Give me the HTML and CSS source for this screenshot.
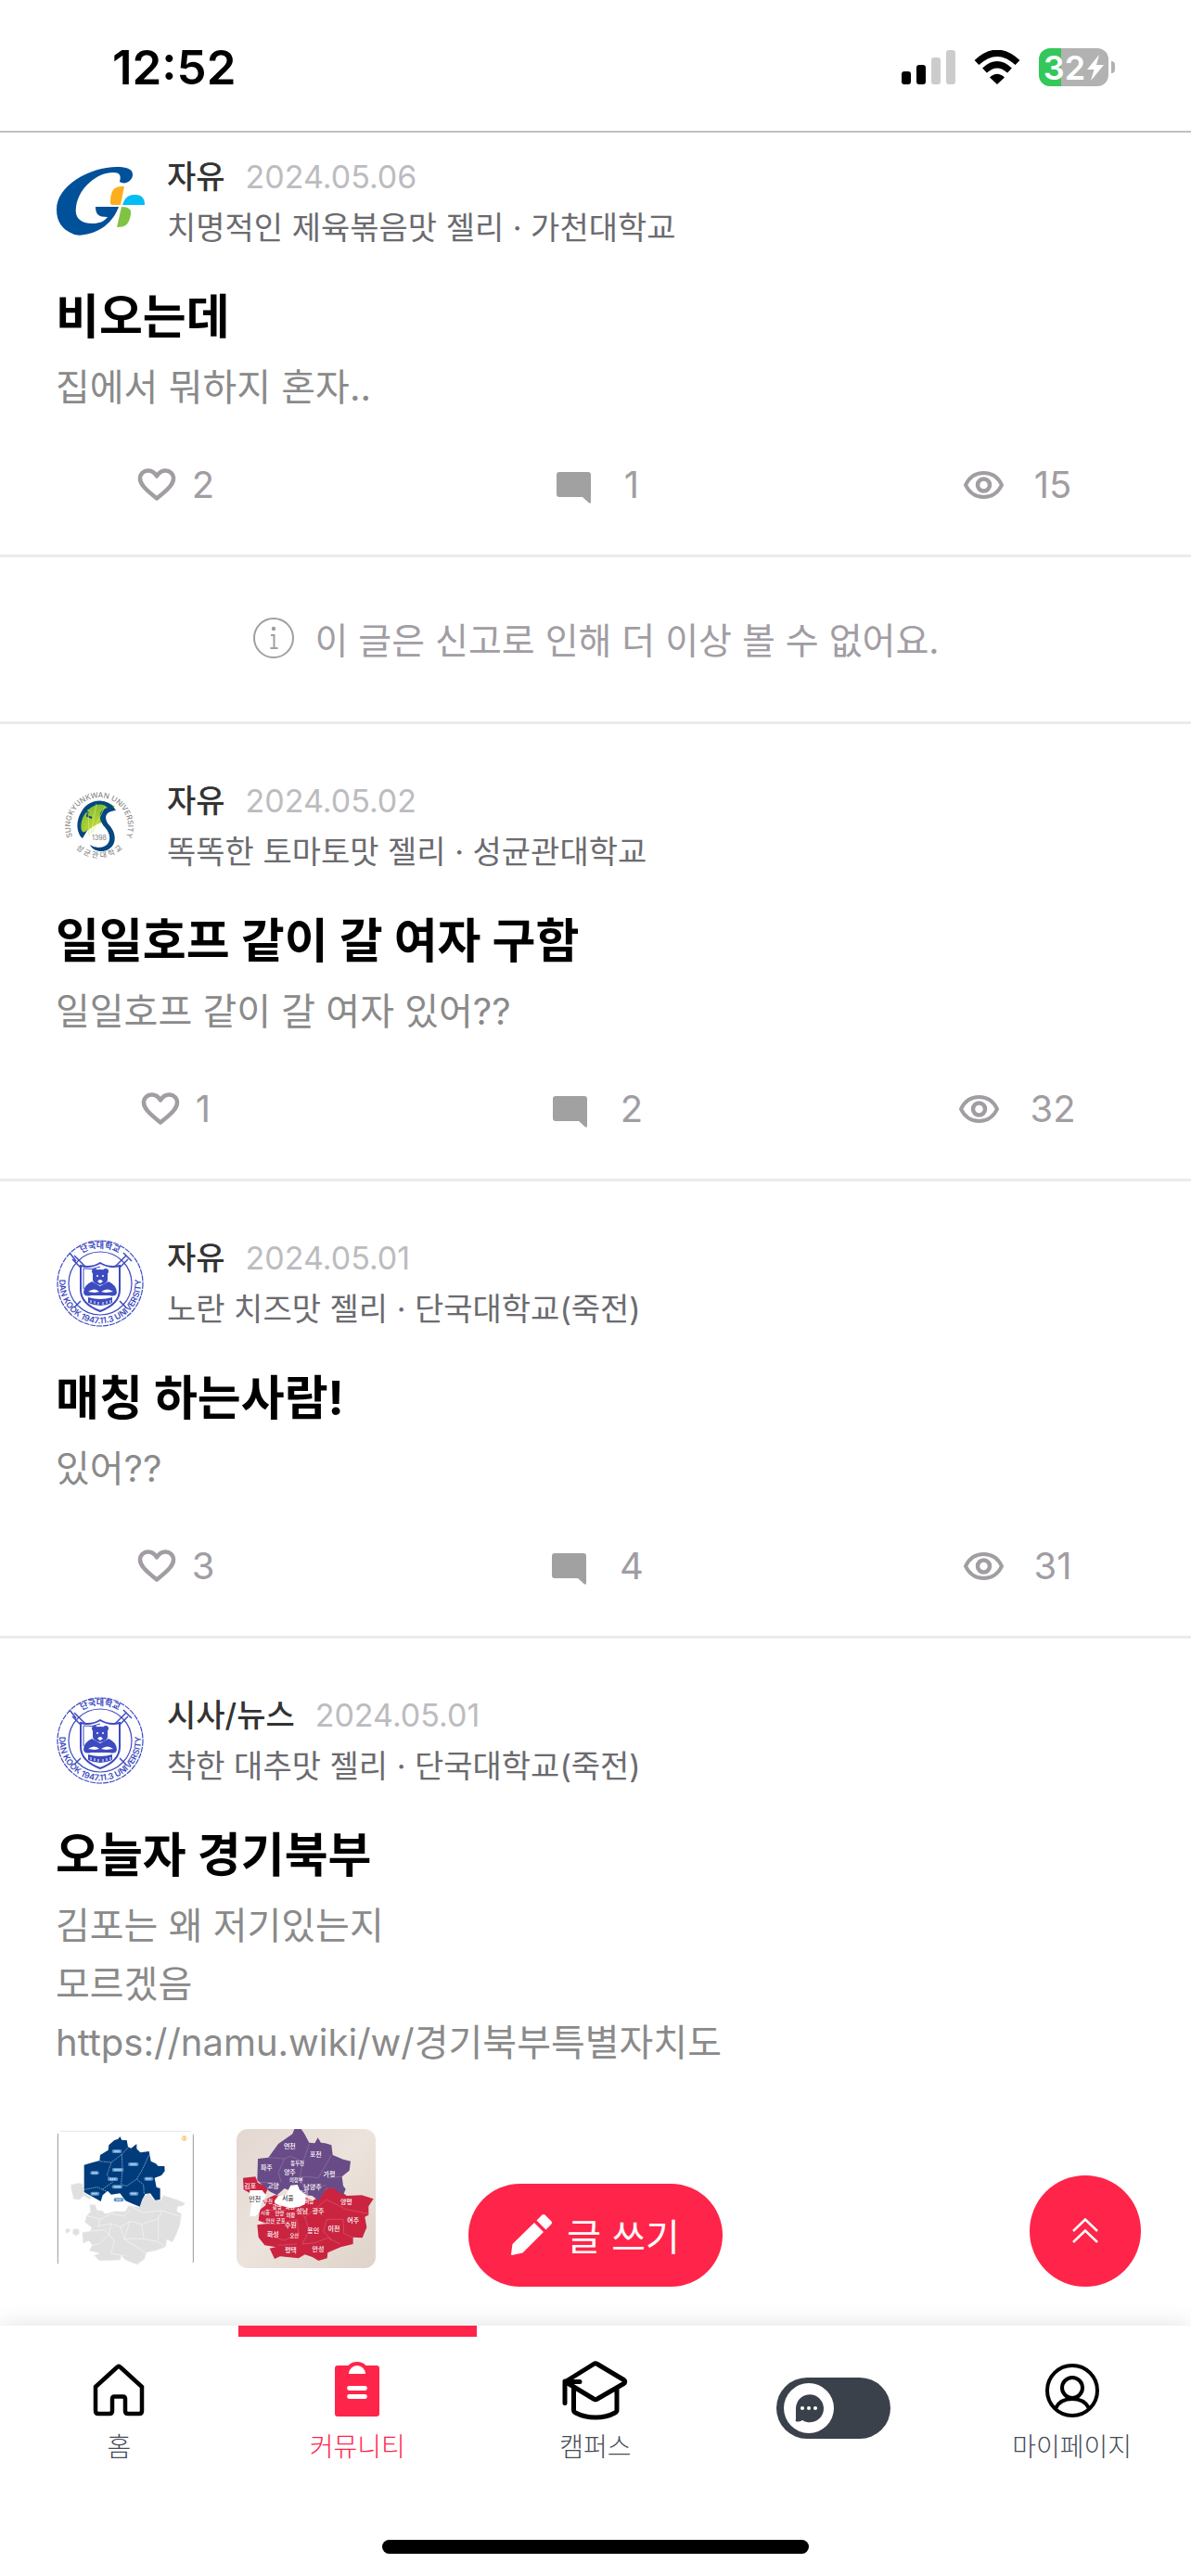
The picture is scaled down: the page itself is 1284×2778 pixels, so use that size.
FILE: index.html
```html
<!DOCTYPE html>
<html lang="ko">
<head>
    <meta charset="UTF-8">
    <meta name="viewport" content="width=device-width, initial-scale=1.0">
    <title>커뮤니티</title>
    <link rel="stylesheet" href="styles.css">
</head>
<body>
    <!-- shared icons and school logos -->
    <svg class="sprite" aria-hidden="true">
        <defs>
            <path id="dk-top" d="M10 48A38 38 0 0 1 86 48"/>
            <path id="dk-bottom" d="M10 25A44 44 0 1 0 86 25"/>
        </defs>
        <symbol id="icon-heart" viewBox="0 0 48 48">
            <path d="M24 38.500C10 27.500 6 22.500 6 17C6 12 10 8.500 14.500 8.500C18.500 8.500 22 11 24 14.500C26 11 29.500 8.500 33.500 8.500C38 8.500 42 12 42 17C42 22.500 38 27.500 24 38.500Z" fill="none" stroke="currentColor" stroke-width="4.500" stroke-linejoin="round"/>
        </symbol>
        <symbol id="icon-comment" viewBox="0 0 48 48">
            <path d="M8 10H39Q42 10 42 13V42Q42 45 39.500 43L33 37H8Q5 37 5 34V13Q5 10 8 10Z" fill="#a1a1a1"/>
        </symbol>
        <symbol id="icon-eye" viewBox="0 0 48 48">
            <path d="M4 24C8 15.500 15 11 23.500 11S39 15.500 43 24C39 32.500 32 37 23.500 37S8 32.500 4 24Z" fill="none" stroke="currentColor" stroke-width="4"/>
            <circle cx="23.500" cy="24" r="6.500" fill="none" stroke="currentColor" stroke-width="4.500"/>
        </symbol>
        <symbol id="logo-dankook" viewBox="0 0 96 96">
            <g fill="none" stroke="#3d4bc0">
                <circle cx="48" cy="48" r="46" stroke-width="1.200" stroke-dasharray="6 1"/>
                <circle cx="48" cy="48" r="34" stroke-width="1.200"/>
                <path d="M20 18L32 30M18 22L28 32M15 15L22 24M76 18L64 30M78 22L68 32M73 15L82 24M27 67L20 74M69 67L76 74" stroke-width="1.500"/>
                <path d="M48 26Q38 32 27 29V55Q27 70 48 78Q69 70 69 55V29Q58 32 48 26Z" fill="#fff" stroke-width="2"/>
                <path d="M48 30Q39 34 30 32V54" stroke-width="1"/>
            </g>
            <g fill="#3d4bc0">
                <circle cx="42" cy="35" r="3"/>
                <circle cx="54" cy="35" r="3"/>
                <path d="M40 38Q40 33 48 33T56 38V44Q56 48 48 50Q40 48 40 44Z"/>
                <path d="M39 46Q30 50 30 58Q31 63 38 61H58Q65 63 66 58Q66 50 57 46L48 51Z"/>
                <path d="M35 63Q48 67 61 63V69Q48 75 35 69Z"/>
            </g>
            <g fill="#fff">
                <circle cx="45" cy="40" r="1"/>
                <circle cx="51" cy="40" r="1"/>
                <path d="M45 46Q48 42 51 46L48 48ZM35 57Q42 52 47 57L42 58ZM49 57Q56 52 62 57L54 58Z"/>
                <path d="M38 66V69M42 67V70M46 68V71M51 68V71M55 67V70M59 66V69" stroke="#fff"/>
            </g>
        </symbol>
    </svg>

    <div class="app">
        <header class="status-bar">
            <time class="clock">12:52</time>
            <div class="status-icons">
                <svg class="signal" viewBox="0 0 58 37">
                    <rect x="0" y="23" width="10" height="14" rx="3"/>
                    <rect x="16" y="16" width="10" height="21" rx="3"/>
                    <rect x="32" y="8" width="10" height="29" rx="3" fill="#ccc"/>
                    <rect x="48" y="0" width="10" height="37" rx="3" fill="#ccc"/>
                </svg>
                <svg class="wifi" viewBox="0 0 50 37">
                    <path d="M3 13.500Q25 -7 47 13.500M11.500 22Q25 9.500 38.500 22" fill="none" stroke="#000" stroke-width="7"/>
                    <path d="M17 29.500Q25 22 33 29.500L25 37Z"/>
                </svg>
                <div class="battery">
                    <span class="battery-level">32<svg class="bolt" viewBox="0 0 18 28"><path d="M13 0L0 16H7.500L4 28L18 11H10Z" fill="#fff"/></svg></span>
                    <span class="battery-tip"></span>
                </div>
            </div>
        </header>

        <main class="feed">
            <article class="post">
                <div class="post-header">
                    <svg class="logo" viewBox="0 -5 96 96">
                        <path d="M83 14.500C84 7 76 5 66 5C37 5 1 25 1 51C1 65 8 72 16 76Q22 80 31 78C47 76 62 65 68 48H43C43 56 46 59 56 59C52 64 47 66 40 66C27 66 20 60 22 48C25 27 45 11 62 11C69 11 71 14 69 21C75 25 82 20 83 14.500Z" fill="#00509a"/>
                        <path d="M59 44C59 31 62 25 74 26L70 46H62Q59 46 59 44Z" fill="#fbaf1c"/>
                        <path d="M72 46C75 37 79 35 86 35C93 35 96 39 96 46Z" fill="#00bdf2"/>
                        <path d="M71 48C79 48 82 51 81 56C79 66 77 70 66 70Z" fill="#80c342"/>
                    </svg>
                    <div class="post-info">
                        <div class="post-meta"><b class="category">자유</b><time class="date">2024.05.06</time></div>
                        <div class="author">치명적인 제육볶음맛 젤리 · 가천대학교</div>
                    </div>
                </div>
                <h2 class="post-title">비오는데</h2>
                <p class="post-body">집에서 뭐하지 혼자..</p>
                <div class="stats">
                    <button class="stat like"><svg class="icon"><use href="#icon-heart"/></svg>2</button>
                    <button class="stat"><svg class="icon"><use href="#icon-comment"/></svg>1</button>
                    <span class="stat"><svg class="icon"><use href="#icon-eye"/></svg>15</span>
                </div>
            </article>

            <div class="notice">
                <svg class="icon" viewBox="0 0 48 48">
                    <g fill="none" stroke="currentColor" stroke-width="2">
                        <circle cx="24" cy="24" r="21"/>
                        <path d="M21 21H24.500V34M20.500 35H28.500"/>
                    </g>
                    <circle cx="24" cy="14" r="2.200" fill="currentColor"/>
                </svg>
                이 글은 신고로 인해 더 이상 볼 수 없어요.
            </div>

            <article class="post">
                <div class="post-header">
                    <svg class="logo" viewBox="0 0 96 96">
                        <defs>
                            <radialGradient id="leaf" cx="0.5" cy="0.8" r="0.9">
                                <stop offset="0" stop-color="#c8dc3c"/>
                                <stop offset="1" stop-color="#6cb52d"/>
                            </radialGradient>
                            <path id="skku-top" d="M24 69A31 31 0 1 1 70 69"/>
                            <path id="skku-bottom" d="M13 58A36 36 0 0 0 81 58"/>
                        </defs>
                        <path d="M64 27Q50 17 37 24Q22 34 26 59Q40 47 52 43Q48 31 64 27Z" fill="url(#leaf)"/>
                        <path d="M65 31C56 16 36 18 28 32C20 45 24 57 29 61L35 51C26 62 25 43 32 34C38 25 50 21 56 28C45 31 46 41 53 49C62 59 59 71 46 71Q41 71 37 68C40 75 50 77 57 73C67 67 65 54 57 46C52 39 53 32 65 31Z" fill="#07477f"/>
                        <path d="M31 30L35 33L34 37L39 39" fill="none" stroke="#07477f" stroke-width="2"/>
                        <path d="M36 58L35 30M38 56L44 24M40 54L53 27" stroke="#d7e870" stroke-width=".7"/>
                        <text x="47" y="63" text-anchor="middle" class="year-text">1398</text>
                        <text class="ring-text"><textPath href="#skku-top" startOffset="50%" text-anchor="middle">SUNGKYUNKWAN UNIVERSITY</textPath></text>
                        <text class="ring-text"><textPath href="#skku-bottom" startOffset="50%" text-anchor="middle">성 균 관 대 학 교</textPath></text>
                    </svg>
                    <div class="post-info">
                        <div class="post-meta"><b class="category">자유</b><time class="date">2024.05.02</time></div>
                        <div class="author">똑똑한 토마토맛 젤리 · 성균관대학교</div>
                    </div>
                </div>
                <h2 class="post-title">일일호프 같이 갈 여자 구함</h2>
                <p class="post-body">일일호프 같이 갈 여자 있어??</p>
                <div class="stats">
                    <button class="stat like"><svg class="icon"><use href="#icon-heart"/></svg>1</button>
                    <button class="stat"><svg class="icon"><use href="#icon-comment"/></svg>2</button>
                    <span class="stat"><svg class="icon"><use href="#icon-eye"/></svg>32</span>
                </div>
            </article>

            <article class="post">
                <div class="post-header">
                    <svg class="logo" viewBox="0 0 96 96">
                        <use href="#logo-dankook"/>
                        <text class="seal-text"><textPath href="#dk-top" startOffset="50%" text-anchor="middle">단국대학교</textPath></text>
                        <text class="seal-text"><textPath href="#dk-bottom" startOffset="50%" text-anchor="middle">DAN KOOK 1947.11.3 UNIVERSITY</textPath></text>
                    </svg>
                    <div class="post-info">
                        <div class="post-meta"><b class="category">자유</b><time class="date">2024.05.01</time></div>
                        <div class="author">노란 치즈맛 젤리 · 단국대학교(죽전)</div>
                    </div>
                </div>
                <h2 class="post-title">매칭 하는사람!</h2>
                <p class="post-body">있어??</p>
                <div class="stats">
                    <button class="stat like"><svg class="icon"><use href="#icon-heart"/></svg>3</button>
                    <button class="stat"><svg class="icon"><use href="#icon-comment"/></svg>4</button>
                    <span class="stat"><svg class="icon"><use href="#icon-eye"/></svg>31</span>
                </div>
            </article>

            <article class="post">
                <div class="post-header">
                    <svg class="logo" viewBox="0 0 96 96">
                        <use href="#logo-dankook"/>
                        <text class="seal-text"><textPath href="#dk-top" startOffset="50%" text-anchor="middle">단국대학교</textPath></text>
                        <text class="seal-text"><textPath href="#dk-bottom" startOffset="50%" text-anchor="middle">DAN KOOK 1947.11.3 UNIVERSITY</textPath></text>
                    </svg>
                    <div class="post-info">
                        <div class="post-meta"><b class="category">시사/뉴스</b><time class="date">2024.05.01</time></div>
                        <div class="author">착한 대추맛 젤리 · 단국대학교(죽전)</div>
                    </div>
                </div>
                <h2 class="post-title">오늘자 경기북부</h2>
                <p class="post-body">김포는 왜 저기있는지<br>모르겠음<br>https://namu.wiki/w/경기북부특별자치도</p>
                <div class="photos">
                    <svg class="photo" viewBox="60 48 450 450">
                        <rect x="60" y="48" width="450" height="450" fill="#fff"/>
                        <path d="M68 55H505" stroke="#e6e6e6" stroke-width="3"/>
                        <path d="M67 62V486M505 62V486" stroke="#999" stroke-width="3"/>
                        <g fill="#e0e0e0" stroke="#f7f7f7" stroke-width="2">
                            <path d="M108 228L134 222L148 226L152 255L178 270L170 276L150 264L138 277L118 275L112 250Z"/>
                            <path d="M170 292L188 292L194 310L212 312L220 322L250 314L285 314L296 294L330 300L345 264L362 256L374 274L400 278L408 262L452 276L480 288L470 298L456 298L452 314L467 322L462 360L452 386L438 414L420 406L416 430L388 440L354 448L348 468L324 487L300 478L284 470L272 458L270 472L230 474L200 474L184 456L202 450L168 442L178 424L168 410L148 418L146 382L172 378L176 366L154 350L160 328L172 316Z"/>
                            <path d="M90 376L98 369L108 372L106 380L94 386ZM116 372L134 370L138 386L126 394L114 386Z"/>
                            <path d="M160 328L204 340L240 322L282 330L300 310M204 340L196 362L240 354L270 366L300 346L338 356L392 338L404 312L340 318L296 294M338 356L346 404L390 412L416 430M240 354L232 388L250 412L238 450L284 458M176 378L220 374L232 388L200 420L178 424M270 366L282 404L318 402L346 404M300 346L282 404L324 430L350 448M392 338L392 404M404 312L462 330" fill="none"/>
                        </g>
                        <path d="M230 116L232 100L250 84L262 80L268 72L274 84L290 84L294 106L304 110L322 96L322 112L334 124L362 120L368 152L384 160L392 168L412 168L413 184L402 198L380 206L386 236L398 240V276L382 278L366 256L350 258L340 276L332 299L310 290L286 280L268 256L240 260L228 248L212 262L206 282L152 252V164L180 156L202 150L204 132Z" fill="#003c7b"/>
                        <path d="M202 152L240 156L274 130L294 108M240 156L226 196L244 220L210 244M362 132L340 180L322 210L344 228L346 258M274 130L276 180L272 228L290 232L322 210M152 244L194 236L226 250" fill="none" stroke="#a9c3dc" stroke-width="2" stroke-dasharray="5 2"/>
                        <g fill="#5c93cb">
                            <rect x="242" y="114" width="32" height="12" rx="6"/>
                            <rect x="294" y="156" width="34" height="12" rx="6"/>
                            <rect x="242" y="174" width="38" height="12" rx="6"/>
                            <rect x="172" y="184" width="28" height="12" rx="6"/>
                            <rect x="228" y="204" width="34" height="12" rx="6"/>
                            <rect x="346" y="203" width="30" height="12" rx="6"/>
                            <rect x="242" y="229" width="34" height="12" rx="6"/>
                            <rect x="172" y="251" width="30" height="12" rx="6"/>
                            <rect x="298" y="251" width="30" height="12" rx="6"/>
                            <rect x="248" y="271" width="32" height="12" rx="6"/>
                        </g>
                        <path d="M250 120H268M302 162H322M250 180H272M178 190H194M236 210H256M352 209H370M250 235H270M178 257H196M304 257H322M256 277H272" stroke="#d7e8f8" stroke-width="5" stroke-dasharray="4 2"/>
                        <circle cx="476" cy="78" r="7" fill="none" stroke="#efa524" stroke-width="2"/>
                        <path d="M476 73V83" stroke="#efa524" stroke-width="3"/>
                    </svg>
                    <svg class="photo" viewBox="645 48 450 450">
                        <defs>
                            <linearGradient id="paper" x1="0" y1="0" x2="1" y2="1">
                                <stop offset="0" stop-color="#e2d8d1"/>
                                <stop offset="0.5" stop-color="#ece3dc"/>
                                <stop offset="1" stop-color="#dfd3c8"/>
                            </linearGradient>
                        </defs>
                        <rect x="645" y="48" width="450" height="450" fill="url(#paper)"/>
                        <path d="M666 206L706 202L714 222L748 236L730 280L768 262L790 264L850 300L866 268L890 280L914 268L934 242L956 236L980 248L1002 264L1050 262L1088 274L1072 298V326L1060 332L1066 366L1052 400L1022 398V420L982 430L940 448L938 466L910 474L890 462L866 454L846 466L786 460L768 468L752 434L772 430L736 424L716 398L712 358L744 354L716 344L720 310L740 294L730 280L700 262L668 244Z" fill="#ca2440"/>
                        <path d="M714 144L748 140L780 96L826 64L832 48H854L864 62L880 92L898 94L908 76L918 92L932 94L952 100L956 132L990 146L1014 152L1010 182L986 202L990 232L998 242L990 262L956 238L934 242L910 280L890 264L850 260L800 240L776 262L752 250L712 214Z" fill="#694b87"/>
                        <path d="M688 246H728L742 264L726 284L720 316L706 330H688L690 308L694 290L686 270ZM768 280L780 264L804 262L820 230L842 228L850 246L870 262L866 292L846 300L820 304L790 296L768 288Z" fill="#fff"/>
                        <path d="M748 140L800 144L820 136L860 154L880 96M860 154L850 204L870 202L910 206L952 132M800 144L780 190L790 220M850 204L866 244L934 230M714 220L780 222M940 206L986 202" fill="none" stroke="#b9a7c6" stroke-width="1"/>
                        <path d="M740 310L788 312L836 304L866 334L936 276L1000 308L1072 322M728 354L780 356L840 340L846 386L800 408L740 390M866 334L880 376L858 420L900 416L940 400L980 420M936 340L990 340L992 386L1022 400M840 420L780 424M936 340L926 380L952 406" fill="none" stroke="#e9929f" stroke-width="1"/>
                        <g class="map-labels">
                            <text x="817" y="112">연천</text>
                            <text x="901" y="137">포천</text>
                            <text x="742" y="180">파주</text>
                            <text x="817" y="195">양주</text>
                            <text x="945" y="202">가평</text>
                            <text x="763" y="239">고양</text>
                            <text x="891" y="242">남양주</text>
                            <text x="689" y="239">김포</text>
                            <text x="1000" y="290">양평</text>
                            <text x="1022" y="351">여주</text>
                            <text x="909" y="321">광주</text>
                            <text x="857" y="321">성남</text>
                            <text x="820" y="366">수원</text>
                            <text x="893" y="384">용인</text>
                            <text x="960" y="378">이천</text>
                            <text x="763" y="397">화성</text>
                            <text x="820" y="446">평택</text>
                            <text x="909" y="443">안성</text>
                        </g>
                        <g class="map-labels map-small">
                            <text x="842" y="164">동두천</text>
                            <text x="838" y="219">의정부</text>
                            <text x="861" y="262">구리</text>
                            <text x="880" y="287">하남</text>
                            <text x="747" y="288">부천</text>
                            <text x="776" y="307">광명</text>
                            <text x="818" y="307">과천</text>
                            <text x="738" y="324">시흥</text>
                            <text x="784" y="327">안양</text>
                            <text x="820" y="333">의왕</text>
                            <text x="754" y="350">안산</text>
                            <text x="788" y="350">군포</text>
                            <text x="832" y="398">오산</text>
                        </g>
                        <g class="map-labels map-dark">
                            <text x="811" y="280">서울</text>
                            <text x="704" y="281">인천</text>
                        </g>
                    </svg>
                </div>
            </article>
        </main>

        <footer class="bottom">
            <button class="write">
                <svg class="pencil" viewBox="0 0 44 44"><path d="M25 9L35 19L12.500 41.500L1 44Q0 44 0 43L1.500 32ZM27.500 6.500L33 1Q35 -1 37 1L43 7Q45 9 43 11L37.500 16.500Z" fill="#fff"/></svg>
                글 쓰기
            </button>
            <button class="to-top" aria-label="맨 위로">
                <svg viewBox="0 0 28 28"><path d="M1 14L14 1.500L27 14M1 26L14 13.500L27 26" fill="none" stroke="#fff" stroke-width="2.500"/></svg>
            </button>

            <nav class="tabs">
                <a class="tab" href="#home">
                    <svg class="tab-icon" viewBox="0 0 72 72"><path d="M11 32L34 11Q36 9 38 11L61 32V58Q61 61 58 61H46Q43 61 43 58V45Q43 42.500 40.500 42.500H31.500Q29 42.500 29 45V58Q29 61 26 61H14Q11 61 11 58Z" fill="none" stroke="#000" stroke-width="4.500"/></svg>
                    홈
                </a>
                <a class="tab active" href="#community">
                    <svg class="tab-icon" viewBox="0 0 72 72">
                        <path d="M15 9H26.500Q30 5 36 5T45.500 9H57Q60 9 60 12V61Q60 64 57 64H15Q12 64 12 61V12Q12 9 15 9Z" fill="currentColor"/>
                        <path d="M27 18A9 9 0 0 1 45 18Z" fill="#fff"/>
                        <path d="M27.500 33.500H44.500M27.500 42.500H44.500" stroke="#fff" stroke-width="4.800" stroke-linecap="round"/>
                    </svg>
                    커뮤니티
                </a>
                <a class="tab" href="#campus">
                    <svg class="tab-icon" viewBox="0 0 72 72"><path d="M3.500 26.500L34 7.500Q36 6 38 7.500L66.500 24.500Q69 26.500 66.500 28.500L38 45Q36 46.500 34 45ZM3 26V49.500M3.500 26.500H19M12.500 33V57Q12.500 59 14.500 60Q24 65 36 65T57 60Q59 59 59 57V33" fill="none" stroke="#000" stroke-width="5" stroke-linecap="round" stroke-linejoin="round"/></svg>
                    캠퍼스
                </a>
                <label class="switch">
                    <input type="checkbox" aria-label="채팅">
                    <span class="knob">
                        <svg viewBox="0 0 54 54">
                            <path d="M13 39V27A15 15 0 1 1 20 40Q17 42 14 41.500Q12 41 13 39Z" fill="#3b414b"/>
                            <g fill="#fff"><circle cx="20" cy="27" r="2"/><circle cx="27" cy="27" r="2"/><circle cx="34" cy="27" r="2"/></g>
                        </svg>
                    </span>
                </label>
                <a class="tab" href="#mypage">
                    <svg class="tab-icon" viewBox="0 0 72 72">
                        <g fill="none" stroke="#000" stroke-width="4">
                            <circle cx="36" cy="36" r="27"/>
                            <circle cx="36" cy="33" r="11"/>
                            <path d="M18 55Q23 45 36 45T54 55"/>
                        </g>
                    </svg>
                    마이페이지
                </a>
            </nav>
            <div class="home-indicator"></div>
        </footer>
    </div>
</body>
</html>
```

FILE: styles.css
```css
* {
    box-sizing: border-box;
}

body {
    margin: 0;
    background: #fff;
    font-family: Inter, "Noto Sans CJK KR", sans-serif;
    color: #000;
}

button {
    border: 0;
    padding: 0;
    background: none;
    font: inherit;
    color: inherit;
    cursor: pointer;
}

.sprite {
    position: absolute;
    width: 0;
    height: 0;
}

.app {
    display: flex;
    flex-direction: column;
    height: 100vh;
    overflow: hidden;
}

/* Status bar */
.status-bar {
    display: flex;
    flex: none;
    justify-content: space-between;
    align-items: center;
    height: 143px;
    padding: 4px 82px 0 121px;
    border-bottom: 2px solid #c0c0c0;
}

.clock {
    font-size: 51px;
    font-weight: 600;
}

.status-icons {
    display: flex;
    align-items: center;
    gap: 20px;
}

.signal {
    width: 58px;
    height: 37px;
}

.wifi {
    width: 50px;
    height: 37px;
}

.battery {
    display: flex;
    align-items: center;
    gap: 3px;
}

.battery-level {
    display: flex;
    align-items: center;
    justify-content: center;
    gap: 2px;
    width: 75px;
    height: 41px;
    border-radius: 12px;
    background: linear-gradient(to right, #34c759 32%, #b2b2b2 32%);
    color: #fff;
    font-size: 36px;
    font-weight: 600;
}

.bolt {
    width: 18px;
    height: 28px;
}

.battery-tip {
    width: 4px;
    height: 13px;
    border-radius: 0 4px 4px 0;
    background: #b2b2b2;
}

/* Feed */
.feed {
    flex: 1;
    min-height: 0;
    overflow: hidden;
}

.post {
    padding: 62px 60px 51px;
    border-bottom: 3px solid #ebebeb;
}

/* partly scrolled under the status bar */
.post:first-child {
    padding-top: 27px;
}

.post:last-child {
    border-bottom: 0;
}

.post-header {
    display: flex;
    align-items: center;
    gap: 24px;
    height: 96px;
}

.logo {
    flex: none;
    width: 96px;
    height: 96px;
}

.post-info {
    font-size: 34px;
    line-height: 55px;
}

.post-meta {
    display: flex;
    gap: 22px;
}

.category {
    color: #333;
    font-weight: 500;
}

.date {
    color: #bcbcc0;
}

.author {
    color: #6b6b6f;
}

.post-title {
    margin: 38px 0 6px;
    font-size: 51px;
    font-weight: 700;
    line-height: 76px;
}

.post-body {
    margin: 0;
    color: #8a8a8a;
    font-size: 40px;
    line-height: 63px;
}

.stats {
    display: flex;
    justify-content: space-between;
    margin-top: 50px;
}

.stat {
    display: flex;
    align-items: center;
    justify-content: center;
    gap: 30px;
    width: 256px;
    height: 48px;
    color: #a19da3;
    font-size: 40px;
    line-height: 48px;
}

.like {
    gap: 14px;
}

.icon {
    flex: none;
    width: 48px;
    height: 48px;
}

.notice {
    display: flex;
    align-items: center;
    justify-content: center;
    gap: 20px;
    height: 180px;
    padding-bottom: 4px;
    border-bottom: 3px solid #ebebeb;
    color: #a19da3;
    font-size: 39px;
}

.photos {
    display: flex;
    gap: 45px;
    margin-top: 62px;
}

.photo {
    width: 150px;
    height: 150px;
    border-radius: 12px;
}

/* Lettering inside the logos and the map */
.seal-text {
    fill: #3d4bc0;
    font-size: 9px;
    font-weight: 600;
}

.ring-text {
    fill: #777;
    font-size: 8px;
}

.year-text {
    fill: #777;
    font-size: 7px;
}

.map-labels {
    fill: #fff;
    font-size: 21px;
    font-weight: 500;
    text-anchor: middle;
}

.map-small {
    font-size: 16px;
}

.map-dark {
    fill: #444;
}

/* Bottom area */
.bottom {
    position: relative;
    flex: none;
    height: 270px;
    background: #fff;
    box-shadow: 0 0 24px rgba(0, 0, 0, .12);
}

.write {
    position: absolute;
    bottom: calc(100% + 42px);
    left: 50%;
    transform: translateX(-50%);
    display: flex;
    align-items: center;
    justify-content: center;
    gap: 16px;
    width: 274px;
    height: 111px;
    padding-bottom: 2px;
    border-radius: 56px;
    background: #ff2449;
    color: #fff;
    font-size: 40px;
    white-space: nowrap;
}

.pencil {
    width: 44px;
    height: 44px;
}

.to-top {
    position: absolute;
    right: 54px;
    bottom: calc(100% + 42px);
    display: flex;
    align-items: center;
    justify-content: center;
    width: 120px;
    height: 120px;
    border-radius: 50%;
    background: #ff2449;
}

.to-top svg {
    width: 28px;
    height: 28px;
}

.tabs {
    display: grid;
    grid-template-columns: repeat(5, 1fr);
    height: 178px;
}

.tab {
    display: flex;
    flex-direction: column;
    align-items: center;
    gap: 5px;
    padding-top: 22px;
    border-top: 12px solid transparent;
    color: #454b55;
    font-size: 28px;
    font-weight: 300;
    line-height: 40px;
    text-decoration: none;
}

.tab.active {
    border-top-color: #ff2449;
    color: #ff2449;
}

.tab-icon {
    width: 72px;
    height: 72px;
}

/* Chat switch, input and knob share one grid cell */
.switch {
    display: grid;
    align-items: center;
    place-self: center;
    cursor: pointer;
}

.switch input {
    grid-area: 1 / 1;
    appearance: none;
    width: 123px;
    height: 66px;
    margin: 0;
    border-radius: 33px;
    background: #3b414b;
}

.knob {
    grid-area: 1 / 1;
    width: 54px;
    height: 54px;
    margin-left: 8px;
    border-radius: 50%;
    background: #fff;
}

.home-indicator {
    width: 460px;
    height: 15px;
    margin: 53px auto 0;
    border-radius: 8px;
    background: #000;
}
```
